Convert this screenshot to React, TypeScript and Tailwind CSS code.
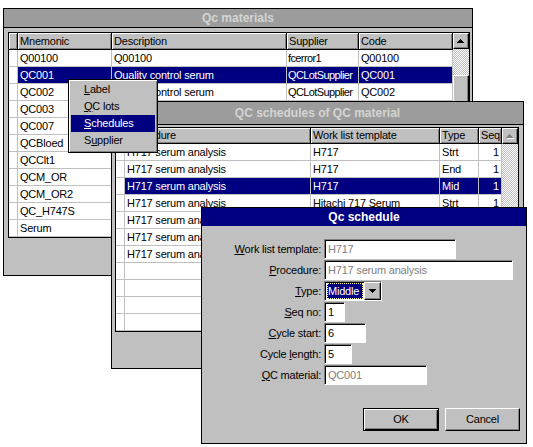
import React from 'react';

const checker =
  'bg-[repeating-conic-gradient(#c0c0c0_0%_25%,#ffffff_0%_50%)] bg-[length:2px_2px]';
const raised =
  'bg-[#c0c0c0] border border-t-white border-l-white border-r-black border-b-black shadow-[inset_-1px_-1px_0_#808080]';
const sunken =
  'border border-t-[#808080] border-l-[#808080] border-r-white border-b-white shadow-[inset_1px_1px_0_#000]';

function UpArrow({ disabled }: { disabled?: boolean }) {
  const c = disabled ? '#808080' : '#000';
  return (
    <svg width="8" height="5" viewBox="0 0 8 5" shapeRendering="crispEdges">
      {disabled && (
        <g fill="#fff">
          <rect x="4" y="1" width="1" height="1" />
          <rect x="1" y="4" width="7" height="1" />
        </g>
      )}
      <g fill={c}>
        <rect x="3" y="0" width="1" height="1" />
        <rect x="2" y="1" width="3" height="1" />
        <rect x="1" y="2" width="5" height="1" />
        <rect x="0" y="3" width="7" height="1" />
      </g>
    </svg>
  );
}

function DownArrow() {
  return (
    <svg width="7" height="4" viewBox="0 0 7 4" shapeRendering="crispEdges">
      <g fill="#000">
        <rect x="0" y="0" width="7" height="1" />
        <rect x="1" y="1" width="5" height="1" />
        <rect x="2" y="2" width="3" height="1" />
        <rect x="3" y="3" width="1" height="1" />
      </g>
    </svg>
  );
}

type Col = { w: string; label: string; right?: boolean; tight?: boolean };

function Grid({
  cols,
  rows,
  selected,
  empty,
  headerH,
  scrollbar,
}: {
  cols: Col[];
  rows: string[][];
  selected: number;
  empty: number;
  headerH: string;
  scrollbar: React.ReactNode;
}) {
  const all = [...rows, ...Array.from({ length: empty }, () => cols.slice(1).map(() => ''))];
  return (
    <div className="flex border border-black bg-white self-start">
      <div className="flex flex-col">
        <div className={`flex ${headerH} border-b border-black bg-[#c0c0c0]`}>
          <div className="w-[9px] shrink-0 border-r border-black shadow-[inset_1px_1px_0_#fff,inset_-1px_-1px_0_#808080]" />
          {cols.slice(1).map((c, i) => (
            <div
              key={i}
              className={`${c.w} shrink-0 border-r border-black shadow-[inset_1px_1px_0_#fff,inset_-1px_-1px_0_#808080] px-[2px] flex items-center overflow-hidden whitespace-nowrap leading-none`}
            >
              {c.label}
            </div>
          ))}
        </div>
        {all.map((r, ri) => {
          const sel = ri === selected;
          return (
            <div key={ri} className="flex h-[17px] border-b border-[#c0c0c0]">
              <div className="w-[9px] shrink-0 border-r border-[#c0c0c0]" />
              {cols.slice(1).map((c, ci) => (
                <div
                  key={ci}
                  className={`${c.w} shrink-0 border-r border-[#c0c0c0] flex items-center overflow-hidden whitespace-nowrap leading-none ${
                    c.tight ? 'px-[1px] tracking-[-0.6px]' : 'px-[2px]'
                  } ${c.right ? 'justify-end' : ''} ${sel ? 'bg-[#000080] text-white' : ''}`}
                >
                  {r[ci]}
                </div>
              ))}
            </div>
          );
        })}
      </div>
      {scrollbar}
    </div>
  );
}

function Field({
  label,
  w,
  value,
  disabled,
}: {
  label: React.ReactNode;
  w: string;
  value?: string;
  disabled?: boolean;
}) {
  return (
    <div className="flex items-center h-[20px]">
      <div className="w-[119px] text-right whitespace-nowrap leading-none">{label}</div>
      <div
        className={`ml-[3px] ${w} h-[20px] bg-white ${sunken} pl-[3px] flex items-center whitespace-nowrap overflow-hidden leading-none ${
          disabled ? 'text-[#808080]' : 'text-black'
        }`}
      >
        {value}
      </div>
    </div>
  );
}

export default function App() {
  const g1cols: Col[] = [
    { w: 'w-[9px]', label: '' },
    { w: 'w-[94px]', label: 'Mnemonic' },
    { w: 'w-[175px]', label: 'Description' },
    { w: 'w-[72px]', label: 'Supplier', tight: true },
    { w: 'w-[94px]', label: 'Code' },
  ];
  const g1rows = [
    ['Q00100', 'Q00100', 'fcerror1', 'Q00100'],
    ['QC001', 'Quality control serum', 'QCLotSupplier', 'QC001'],
    ['QC002', 'Quality control serum', 'QCLotSupplier', 'QC002'],
    ['QC003', 'Quality control serum', 'QCLotSupplier', 'QC003'],
    ['QC007', 'Quality control serum', 'QCLotSupplier', 'QC007'],
    ['QCBloed', 'Bloed', 'QCLotSupplier', 'QCBloed'],
    ['QCClt1', 'Clot 1', 'QCLotSupplier', 'QCClt1'],
    ['QCM_OR', 'QCM OR', 'QCLotSupplier', 'QCM_OR'],
    ['QCM_OR2', 'QCM OR2', 'QCLotSupplier', 'QCM_OR2'],
    ['QC_H747S', 'H747 Serum', 'QCLotSupplier', 'QC_H747S'],
    ['Serum', 'Serum', 'QCLotSupplier', 'Serum'],
  ];
  const g2cols: Col[] = [
    { w: 'w-[9px]', label: '' },
    { w: 'w-[186px]', label: 'Procedure' },
    { w: 'w-[129px]', label: 'Work list template' },
    { w: 'w-[39px]', label: 'Type' },
    { w: 'w-[23px]', label: 'Seq', right: true },
  ];
  const g2rows = [
    ['H717 serum analysis', 'H717', 'Strt', '1'],
    ['H717 serum analysis', 'H717', 'End', '1'],
    ['H717 serum analysis', 'H717', 'Mid', '1'],
    ['H717 serum analysis', 'Hitachi 717 Serum', 'Strt', '1'],
    ['H717 serum analysis', 'Hitachi 717 Serum', 'End', '1'],
    ['H717 serum analysis', 'Hitachi 717 Serum', 'Mid', '1'],
    ['H717 serum analysis', 'H717', 'Strt', '2'],
  ];

  return (
    <div className="relative w-[533px] h-[447px] bg-white overflow-hidden text-[11px] tracking-[-0.2px] text-black font-['Liberation_Sans',Arial,sans-serif]">
      {/* Window 1 */}
      <div className="absolute left-[3px] top-[8px] w-[470px] h-[268px] border border-black bg-[#c0c0c0] flex flex-col">
        <div className="h-[19px] shrink-0 bg-[#9c9c9c] border-b border-black flex items-center justify-center text-[12px] tracking-normal font-bold text-[#d4d4d4] leading-none">
          Qc materials
        </div>
        <div className="pt-[4px] pl-[4px] flex">
          <Grid
            cols={g1cols}
            rows={g1rows}
            selected={1}
            empty={0}
            headerH="h-[17px]"
            scrollbar={
              <div className="w-[16px] flex flex-col">
                <div className={`h-[16px] ${raised} flex items-center justify-center`}>
                  <UpArrow />
                </div>
                <div className={`h-[26px] ${checker}`} />
                <div className={`h-[60px] ${raised}`} />
                <div className={`flex-1 ${checker}`} />
              </div>
            }
          />
        </div>
      </div>

      {/* Window 2 */}
      <div className="absolute left-[111px] top-[101px] w-[413px] h-[268px] border border-black bg-[#c0c0c0] flex flex-col">
        <div className="h-[23px] shrink-0 bg-[#9c9c9c] border-b border-black flex items-center justify-center text-[12px] tracking-normal font-bold text-[#d4d4d4] leading-none">
          QC schedules of QC material
        </div>
        <div className="pt-[2px] pl-[3px] flex">
          <Grid
            cols={g2cols}
            rows={g2rows}
            selected={2}
            empty={4}
            headerH="h-[16px]"
            scrollbar={
              <div className="w-[16px] flex flex-col">
                <div className={`h-[16px] ${raised} flex items-center justify-center`}>
                  <UpArrow disabled />
                </div>
                <div className={`flex-1 ${checker}`} />
              </div>
            }
          />
        </div>
      </div>

      {/* Context menu */}
      <div className="absolute left-[68px] top-[79px] w-[90px] h-[74px] bg-[#c0c0c0] border border-black shadow-[inset_1px_1px_0_#fff,inset_-1px_-1px_0_#808080] pt-[1px] px-[2px] flex flex-col">
        <div className="h-[17px] pl-[13px] flex items-center leading-none">
          <span>
            <u>L</u>abel
          </span>
        </div>
        <div className="h-[17px] pl-[13px] flex items-center leading-none">
          <span>
            <u>Q</u>C lots
          </span>
        </div>
        <div className="h-[17px] pl-[13px] flex items-center leading-none bg-[#000080] text-white">
          <span>
            <u>S</u>chedules
          </span>
        </div>
        <div className="h-[17px] pl-[13px] flex items-center leading-none">
          <span>
            S<u>u</u>pplier
          </span>
        </div>
      </div>

      {/* Dialog */}
      <div className="absolute left-[201px] top-[207px] w-[326px] h-[237px] border border-black bg-[#c0c0c0] flex flex-col">
        <div className="h-[18px] shrink-0 bg-[#000080] flex items-center justify-center text-[12px] tracking-normal font-bold text-white leading-none">
          Qc schedule
        </div>
        <div className="flex flex-col gap-[1px] pt-[13px]">
          <Field
            label={
              <>
                <u>W</u>ork list template:
              </>
            }
            w="w-[132px]"
            value="H717"
            disabled
          />
          <Field
            label={
              <>
                <u>P</u>rocedure:
              </>
            }
            w="w-[189px]"
            value="H717 serum analysis"
            disabled
          />
          <div className="flex items-center h-[20px]">
            <div className="w-[119px] text-right leading-none">
              <u>T</u>ype:
            </div>
            <div className={`ml-[3px] w-[58px] h-[20px] bg-white ${sunken} flex items-stretch`}>
              <div className="flex-1 flex p-[1px] pl-[2px]">
                <div className="flex-1 bg-[#000080] text-white flex items-center pl-[1px] leading-none outline outline-1 outline-dotted outline-[#ffff80] -outline-offset-1">
                  Middle
                </div>
              </div>
              <div className={`w-[17px] ${raised} flex items-center justify-center`}>
                <DownArrow />
              </div>
            </div>
          </div>
          <Field
            label={
              <>
                <u>S</u>eq no:
              </>
            }
            w="w-[21px]"
            value="1"
          />
          <Field
            label={
              <>
                <u>C</u>ycle start:
              </>
            }
            w="w-[42px]"
            value="6"
          />
          <Field
            label={
              <>
                Cycle <u>l</u>ength:
              </>
            }
            w="w-[28px]"
            value="5"
          />
          <Field
            label={
              <>
                <u>Q</u>C material:
              </>
            }
            w="w-[103px]"
            value="QC001"
            disabled
          />
        </div>
        <div className="flex justify-end gap-[6px] mt-[23px] pr-[6px]">
          <div className="w-[76px] h-[23px] bg-[#c0c0c0] border border-black shadow-[inset_1px_1px_0_#fff,inset_-1px_-1px_0_#000,inset_-2px_-2px_0_#808080] flex items-center justify-center leading-none">
            OK
          </div>
          <div className={`w-[75px] h-[23px] ${raised} flex items-center justify-center leading-none`}>
            Cancel
          </div>
        </div>
      </div>
    </div>
  );
}
